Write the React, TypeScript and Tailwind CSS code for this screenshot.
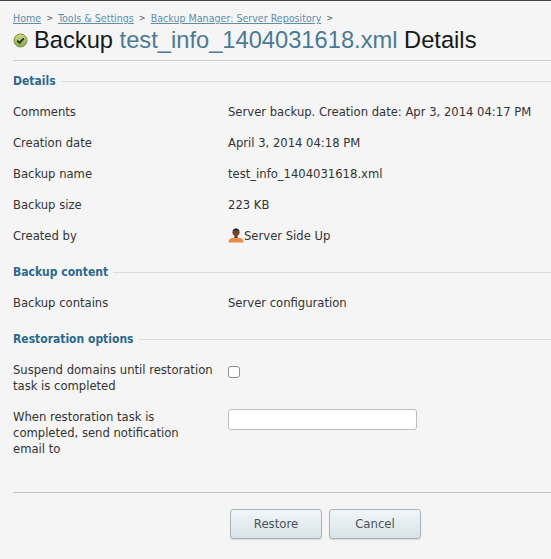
const font = { fontFamily: '"DejaVu Sans Condensed", "DejaVu Sans", sans-serif' };

function Section({ title }: { title: string }) {
  return (
    <div className="flex items-center gap-[5px] h-[20px]">
      <h3 className="text-[12px] leading-[20px] font-bold text-[#2b6a8c] whitespace-nowrap">{title}</h3>
      <div className="flex-1 h-px bg-[#dcdcdc] mr-[-13px]" />
    </div>
  );
}

function Row({ label, children }: { label: string; children: React.ReactNode }) {
  return (
    <div className="flex h-[31px] items-center">
      <div className="w-[215px] shrink-0">{label}</div>
      <div className="flex items-center">{children}</div>
    </div>
  );
}

function Crumb({ children }: { children: React.ReactNode }) {
  return <a className="text-[#5d8fab] underline">{children}</a>;
}

function Sep() {
  return <span className="mx-[5px] text-[#555] text-[9px]">&gt;</span>;
}

function Button({ children }: { children: React.ReactNode }) {
  return (
    <button className="w-[92px] h-[30px] rounded-[3px] border border-[#a9b4ba] bg-gradient-to-b from-[#f0f6f9] to-[#d8e2e7] text-[#4a5358] text-[13px] shadow-[0_1px_1px_rgba(0,0,0,0.12)]">
      {children}
    </button>
  );
}

export default function App() {
  return (
    <div style={font} className="w-[551px] h-[559px] overflow-hidden bg-[#f5f5f5] border-t border-[#444] text-[12.9px] text-[#333] px-[13px]">
      <div className="pt-[8px] h-[18px] box-content flex items-center text-[10.6px] leading-[14px] whitespace-nowrap">
        <Crumb>Home</Crumb><Sep /><Crumb>Tools &amp; Settings</Crumb><Sep /><Crumb>Backup Manager: Server Repository</Crumb><Sep />
      </div>
      <h1 className="flex items-center h-[28px] mt-[-1px] text-[23.7px] leading-[28px] text-[#14191c] whitespace-nowrap" style={{ fontFamily: '"Liberation Sans", sans-serif' }}>
        <svg width="15" height="15" viewBox="0 0 15 15" className="mr-[6px] mt-[1px] shrink-0">
          <defs>
            <linearGradient id="ok" x1="0" y1="0" x2="0" y2="1">
              <stop offset="0" stopColor="#c9d98a" />
              <stop offset="1" stopColor="#8aa648" />
            </linearGradient>
          </defs>
          <circle cx="7.5" cy="7.5" r="6.5" fill="url(#ok)" stroke="#7d8f4a" />
          <path d="M4.3 7.6 L6.6 9.8 L10.8 5.4" fill="none" stroke="#1f2a12" strokeWidth="1.8" />
        </svg>
        <span>Backup <span className="text-[#4b7a94]">test_info_1404031618.xml</span> Details</span>
      </h1>
      <div className="h-px bg-[#cfcfcf] mr-[-13px] mt-[6px]" />

      <div className="mt-[10px]"><Section title="Details" /></div>
      <div className="mt-[5px]">
        <Row label="Comments">Server backup. Creation date: Apr 3, 2014 04:17 PM</Row>
        <Row label="Creation date">April 3, 2014 04:18 PM</Row>
        <Row label="Backup name">test_info_1404031618.xml</Row>
        <Row label="Backup size">223 KB</Row>
        <Row label="Created by">
          <svg width="16" height="16" viewBox="0 0 16 16" className="shrink-0">
            <path d="M0.5 15.5 C0.5 11.5 3.5 10.5 8 10.5 C12.5 10.5 15.5 11.5 15.5 15.5 Z" fill="#ea8a4a" />
            <circle cx="8" cy="5.2" r="3.6" fill="#6b4a30" />
            <path d="M5 3.5 C5.5 1 10.5 1 11 3.5 Z" fill="#2a2420" />
            <rect x="6.5" y="8" width="3" height="3" fill="#5a3c26" />
          </svg>
          <span>Server Side Up</span>
        </Row>
      </div>

      <div className="mt-[11px]"><Section title="Backup content" /></div>
      <div className="mt-[5px]">
        <Row label="Backup contains">Server configuration</Row>
      </div>

      <div className="mt-[11px]"><Section title="Restoration options" /></div>
      <div className="mt-[13px] flex items-center leading-[16px]">
        <div className="w-[215px] shrink-0">Suspend domains until restoration task is completed</div>
        <input type="checkbox" className="appearance-none w-[12px] h-[12px] rounded-[3px] border border-[#8f8f8f] bg-white mt-[-12px]" />
      </div>
      <div className="mt-[15px] flex items-start leading-[16px]">
        <div className="w-[215px] shrink-0 pr-[20px]">When restoration task is completed, send notification email to</div>
        <input type="text" className="w-[189px] h-[21px] rounded-[3px] border border-[#bdbdbd] bg-white" />
      </div>

      <div className="h-px bg-[#c4c4c4] mt-[35px] mr-[-13px]" />
      <div className="flex gap-[7px] mt-[16px] pl-[217px]">
        <Button>Restore</Button>
        <Button>Cancel</Button>
      </div>
    </div>
  );
}
